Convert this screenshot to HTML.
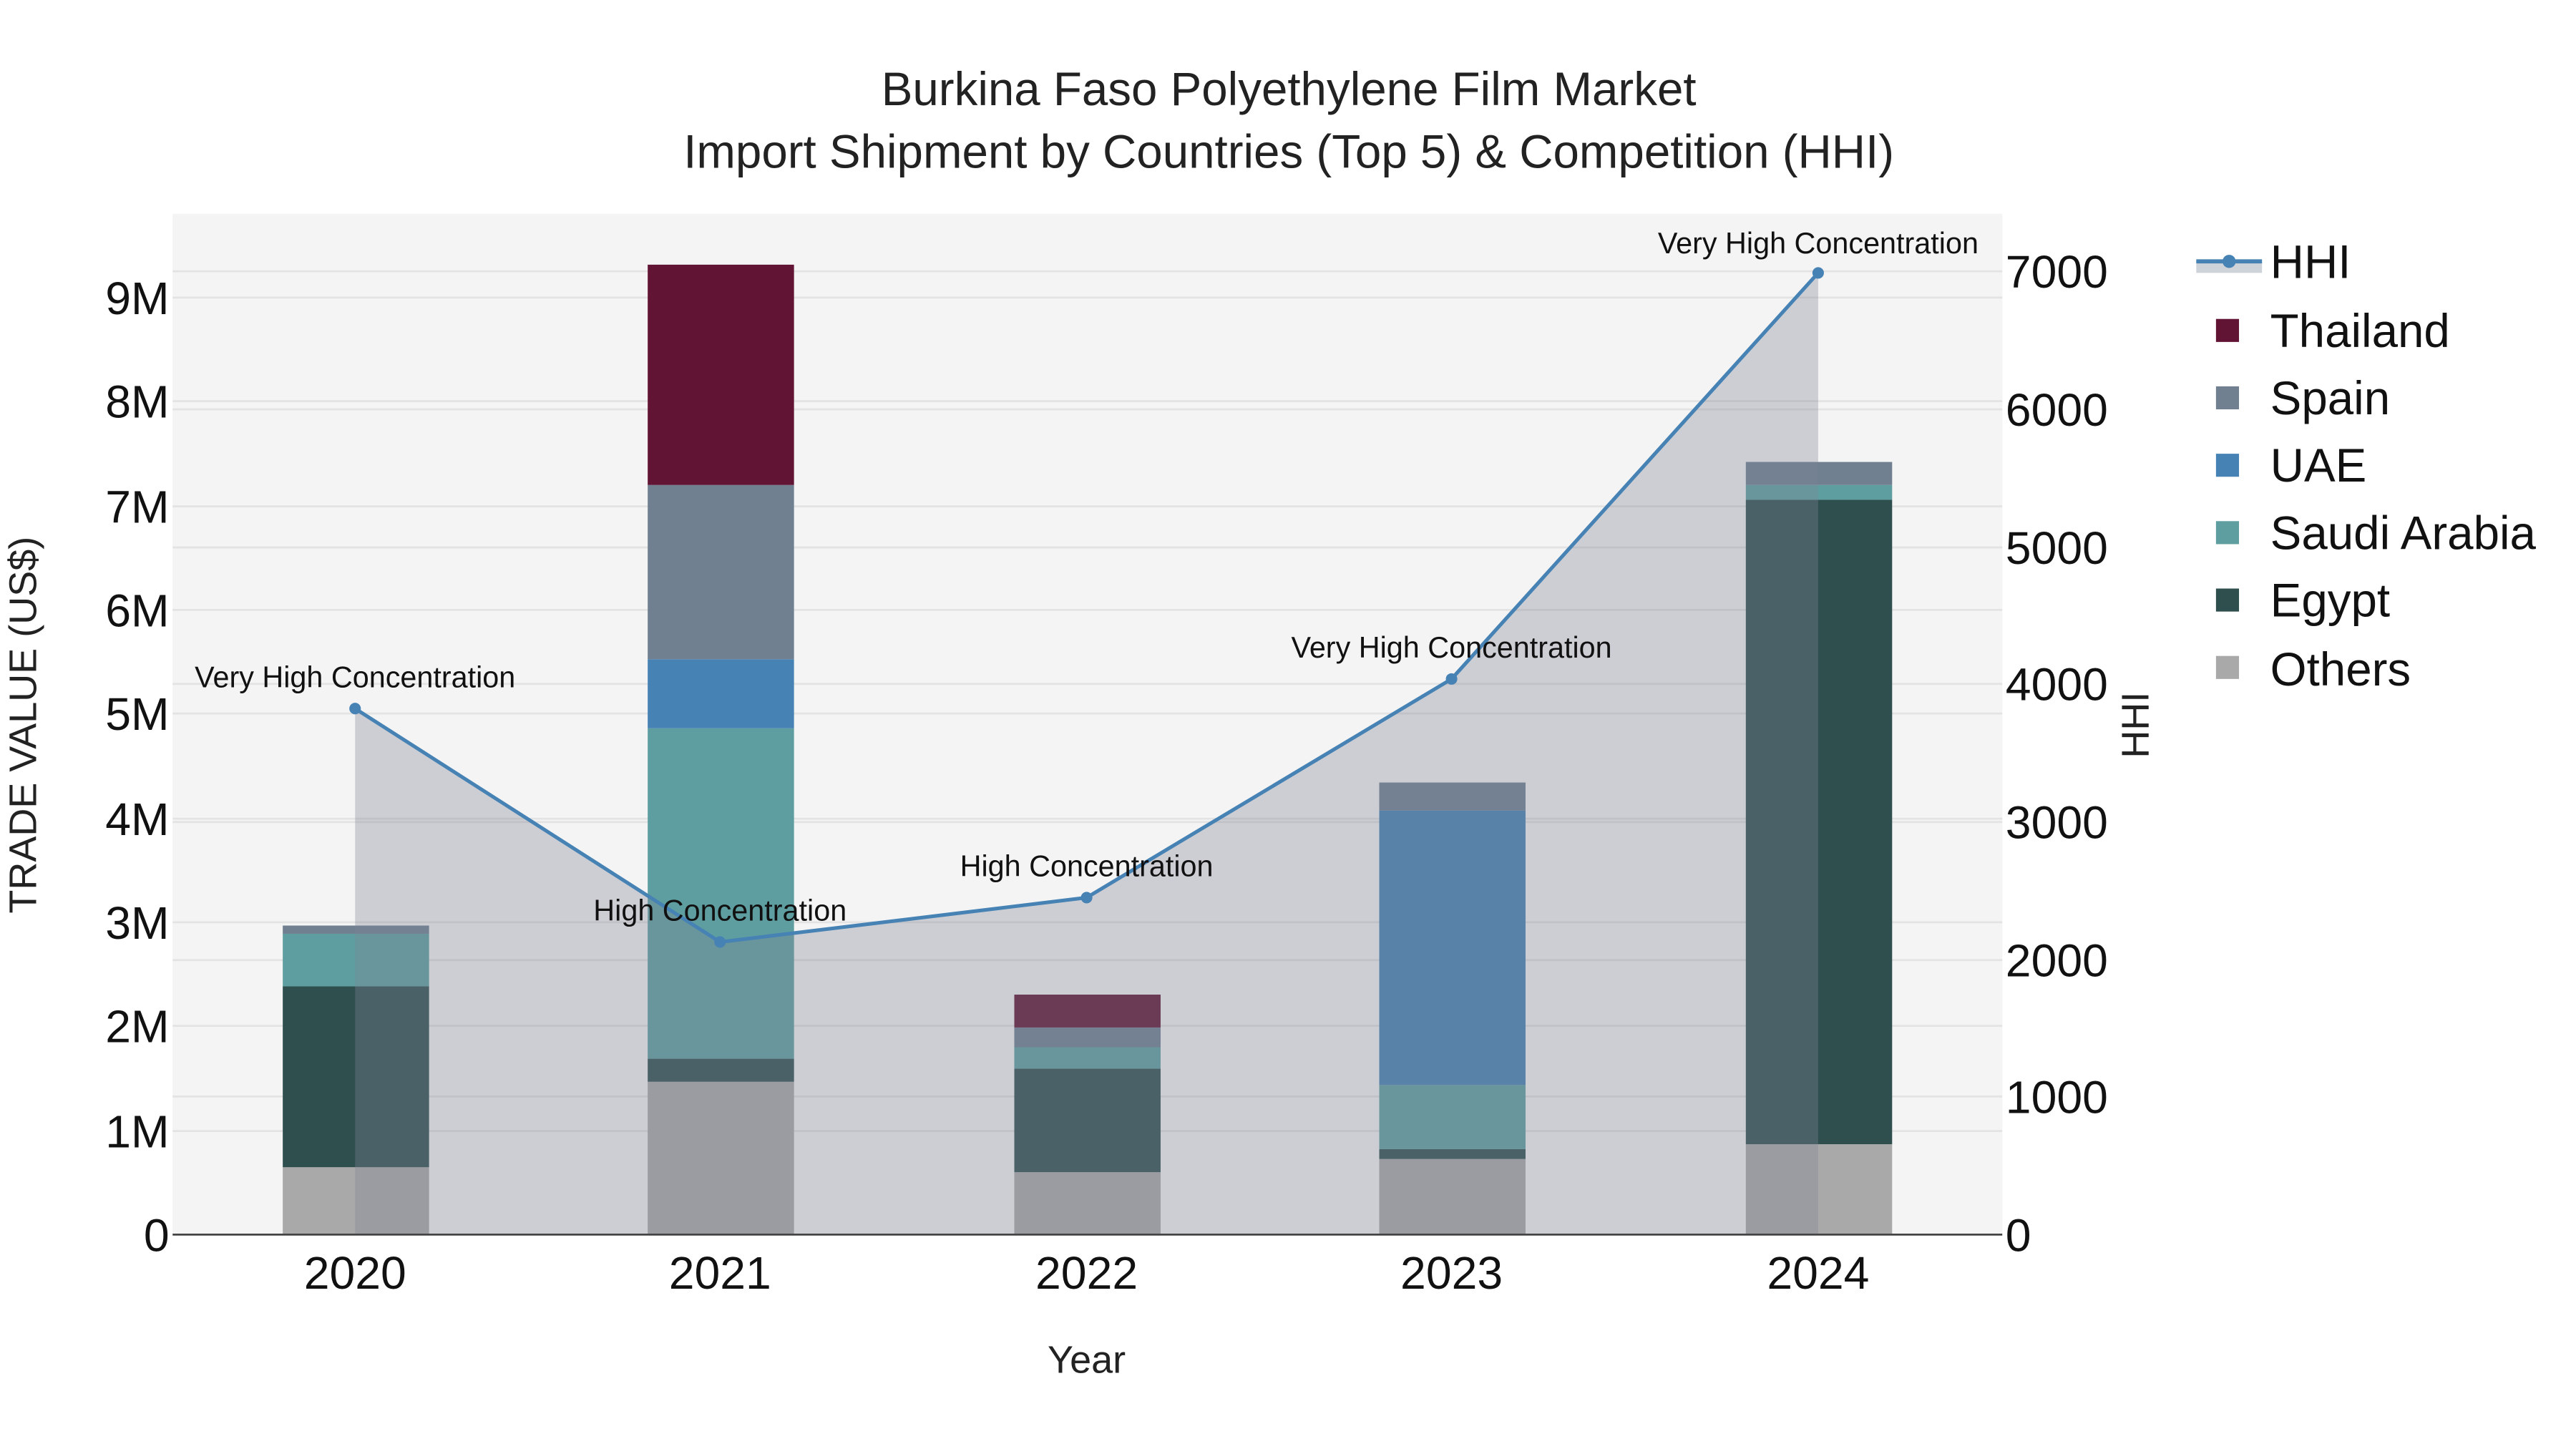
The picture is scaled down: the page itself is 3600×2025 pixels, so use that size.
<!DOCTYPE html>
<html><head><meta charset="utf-8"><style>html,body{margin:0;padding:0;background:#fff}svg{display:block}</style></head>
<body>
<svg width="3600" height="2025" viewBox="0 0 1567 881.4" preserveAspectRatio="none" xmlns="http://www.w3.org/2000/svg" font-family="Liberation Sans, sans-serif">
<rect width="1567" height="881.4" fill="#fff"/>
<rect x="105" y="130" width="1113" height="621" fill="#f4f4f4"/>
<g stroke="#e3e3e3" stroke-width="1.2">
<line x1="105" x2="1218" y1="688" y2="688"/><line x1="105" x2="1218" y1="624" y2="624"/><line x1="105" x2="1218" y1="561" y2="561"/><line x1="105" x2="1218" y1="498" y2="498"/><line x1="105" x2="1218" y1="434" y2="434"/><line x1="105" x2="1218" y1="371" y2="371"/><line x1="105" x2="1218" y1="308" y2="308"/><line x1="105" x2="1218" y1="244" y2="244"/><line x1="105" x2="1218" y1="181" y2="181"/>
<line x1="105" x2="1218" y1="667" y2="667"/><line x1="105" x2="1218" y1="584" y2="584"/><line x1="105" x2="1218" y1="500" y2="500"/><line x1="105" x2="1218" y1="416" y2="416"/><line x1="105" x2="1218" y1="333" y2="333"/><line x1="105" x2="1218" y1="249" y2="249"/><line x1="105" x2="1218" y1="165" y2="165"/>
</g>
<g>
<rect x="172" y="710" width="89" height="41" fill="#A9A9A9"/><rect x="172" y="600" width="89" height="110" fill="#2F4F4F"/><rect x="172" y="568" width="89" height="32" fill="#5F9EA0"/><rect x="172" y="563" width="89" height="5" fill="#708090"/>
<rect x="394" y="658" width="89" height="93" fill="#A9A9A9"/><rect x="394" y="644" width="89" height="14" fill="#2F4F4F"/><rect x="394" y="443" width="89" height="201" fill="#5F9EA0"/><rect x="394" y="401" width="89" height="42" fill="#4682B4"/><rect x="394" y="295" width="89" height="106" fill="#708090"/><rect x="394" y="161" width="89" height="134" fill="#611434"/>
<rect x="617" y="713" width="89" height="38" fill="#A9A9A9"/><rect x="617" y="650" width="89" height="63" fill="#2F4F4F"/><rect x="617" y="637" width="89" height="13" fill="#5F9EA0"/><rect x="617" y="625" width="89" height="12" fill="#708090"/><rect x="617" y="605" width="89" height="20" fill="#611434"/>
<rect x="839" y="705" width="89" height="46" fill="#A9A9A9"/><rect x="839" y="699" width="89" height="6" fill="#2F4F4F"/><rect x="839" y="660" width="89" height="39" fill="#5F9EA0"/><rect x="839" y="493" width="89" height="167" fill="#4682B4"/><rect x="839" y="476" width="89" height="17" fill="#708090"/>
<rect x="1062" y="696" width="89" height="55" fill="#A9A9A9"/><rect x="1062" y="304" width="89" height="392" fill="#2F4F4F"/><rect x="1062" y="295" width="89" height="9" fill="#5F9EA0"/><rect x="1062" y="281" width="89" height="14" fill="#708090"/>
</g>
<polygon points="216,751 216,431 438,573 661,546 883,413 1106,166 1106,751" fill="rgb(125,132,150)" fill-opacity="0.34"/>
<line x1="105" x2="1218" y1="751" y2="751" stroke="#444" stroke-width="1.2"/>
<polyline points="216,431 438,573 661,546 883,413 1106,166" fill="none" stroke="#4682B4" stroke-width="2.2"/>
<g fill="#4682B4"><circle cx="216" cy="431" r="3.5"/><circle cx="438" cy="573" r="3.5"/><circle cx="661" cy="546" r="3.5"/><circle cx="883" cy="413" r="3.5"/><circle cx="1106" cy="166" r="3.5"/></g>
<g font-size="18" fill="#111" text-anchor="middle">
<text x="216" y="418">Very High Concentration</text><text x="438" y="560">High Concentration</text><text x="661" y="533">High Concentration</text><text x="883" y="400">Very High Concentration</text><text x="1106" y="154">Very High Concentration</text>
</g>
<g font-size="28" fill="#111" text-anchor="end">
<text x="103" y="761">0</text><text x="103" y="698">1M</text><text x="103" y="634">2M</text><text x="103" y="571">3M</text><text x="103" y="508">4M</text><text x="103" y="444">5M</text><text x="103" y="381">6M</text><text x="103" y="318">7M</text><text x="103" y="254">8M</text><text x="103" y="191">9M</text>
</g>
<g font-size="28" fill="#111">
<text x="1220" y="761">0</text><text x="1220" y="677">1000</text><text x="1220" y="594">2000</text><text x="1220" y="510">3000</text><text x="1220" y="426">4000</text><text x="1220" y="343">5000</text><text x="1220" y="259">6000</text><text x="1220" y="175">7000</text>
</g>
<g font-size="28" fill="#111" text-anchor="middle">
<text x="216" y="784">2020</text><text x="438" y="784">2021</text><text x="661" y="784">2022</text><text x="883" y="784">2023</text><text x="1106" y="784">2024</text>
</g>
<text x="661" y="835" font-size="23.5" fill="#222" text-anchor="middle">Year</text>
<text transform="translate(22,441) rotate(-90)" font-size="23.5" fill="#222" text-anchor="middle">TRADE VALUE (US$)</text>
<text transform="translate(1307,441) rotate(-90)" font-size="23.5" fill="#222" text-anchor="middle">HHI</text>
<text x="784" y="64" font-size="28.5" fill="#222" text-anchor="middle">Burkina Faso Polyethylene Film Market</text>
<text x="784" y="102" font-size="28.5" fill="#222" text-anchor="middle">Import Shipment by Countries (Top 5) &amp; Competition (HHI)</text>
<rect x="1336" y="159" width="40" height="7" fill="#ced3da"/>
<line x1="1336" x2="1376" y1="159" y2="159" stroke="#4682B4" stroke-width="2.5"/>
<circle cx="1356" cy="159" r="4" fill="#4682B4"/>
<g>
<rect x="1348" y="194" width="14" height="14" fill="#611434"/><rect x="1348" y="235" width="14" height="14" fill="#708090"/><rect x="1348" y="276" width="14" height="14" fill="#4682B4"/><rect x="1348" y="317" width="14" height="14" fill="#5F9EA0"/><rect x="1348" y="358" width="14" height="14" fill="#2F4F4F"/><rect x="1348" y="399" width="14" height="14" fill="#A9A9A9"/>
</g>
<g font-size="28.5" fill="#111">
<text x="1381" y="169">HHI</text><text x="1381" y="211">Thailand</text><text x="1381" y="252">Spain</text><text x="1381" y="293">UAE</text><text x="1381" y="334">Saudi Arabia</text><text x="1381" y="375">Egypt</text><text x="1381" y="417">Others</text>
</g>
</svg>
</body></html>
